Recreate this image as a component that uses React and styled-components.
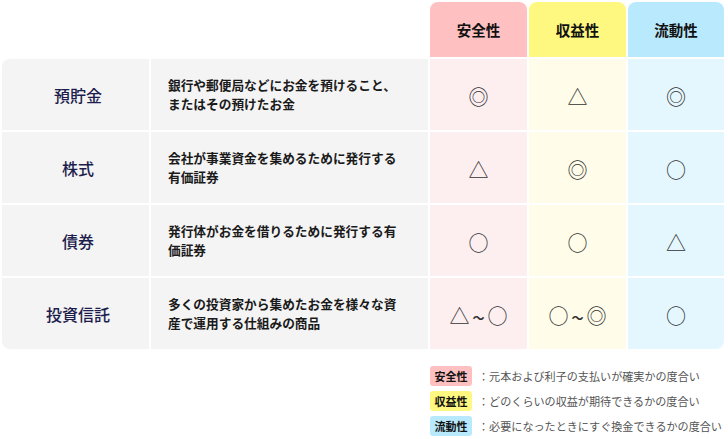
import React from "react";
import styled, { createGlobalStyle } from "styled-components";

const Global = createGlobalStyle`
  html, body { margin: 0; padding: 0; background: #fff; }
  body { font-family: "Noto Sans CJK JP", "Noto Sans", sans-serif; }
`;

const Page = styled.div`
  padding: 2px;
  width: 724px;
  box-sizing: border-box;
`;

const Table = styled.div`
  display: grid;
  grid-template-columns: 147px 277px 97px 97px 96px;
  grid-template-rows: 55px repeat(4, 71px);
  gap: 2px;
`;

const colors = {
  safe: { head: "#ffc0c1", body: "#fdeff0" },
  profit: { head: "#fff880", body: "#fffde9" },
  liquid: { head: "#b9e9fd", body: "#e5f7fe" },
};

const Blank = styled.div``;

const Head = styled.div`
  background: ${(p) => colors[p.$kind].head};
  border-radius: 8px 8px 0 0;
  display: flex;
  align-items: center;
  justify-content: center;
  font-weight: 700;
  font-size: 14.5px;
  color: #111;
`;

const Label = styled.div`
  background: #f4f4f4;
  display: flex;
  align-items: center;
  justify-content: center;
  font-size: 16px;
  font-weight: 500;
  color: #1d1d4d;
  padding-left: 5px;
  border-radius: ${(p) => (p.$first ? "8px 0 0 0" : p.$last ? "0 0 0 8px" : "0")};
`;

const Desc = styled.div`
  background: #f4f4f4;
  display: flex;
  align-items: center;
  padding: 0 12px 0 17px;
  font-size: 12.7px;
  line-height: 18.5px;
  font-weight: 700;
  color: #1a1a1a;
`;

const Mark = styled.div`
  background: ${(p) => colors[p.$kind].body};
  display: flex;
  align-items: center;
  justify-content: center;
  font-size: 20px;
  color: #333;
  padding-top: 4px;
  border-radius: ${(p) => (p.$corner ? "0 0 8px 0" : "0")};
`;

const Tilde = styled.span`
  font-size: 12px;
  font-weight: 700;
  margin: 3px 3px 0;
`;

const Legend = styled.div`
  margin-left: 428px;
  margin-top: 17px;
  display: flex;
  flex-direction: column;
  gap: 5px;
`;

const LegendRow = styled.div`
  display: flex;
  align-items: center;
  gap: 6px;
`;

const Badge = styled.span`
  background: ${(p) => colors[p.$kind].head};
  height: 20px;
  width: 42px;
  display: inline-flex;
  align-items: center;
  justify-content: center;
  border-radius: 3px;
  font-size: 11px;
  font-weight: 700;
  color: #111;
`;

const LegendText = styled.span`
  font-size: 11.1px;
  color: #555;
`;

const rows = [
  { label: "預貯金", desc: "銀行や郵便局などにお金を預けること、\nまたはその預けたお金", marks: ["◎", "△", "◎"] },
  { label: "株式", desc: "会社が事業資金を集めるために発行する\n有価証券", marks: ["△", "◎", "○"] },
  { label: "債券", desc: "発行体がお金を借りるために発行する有\n価証券", marks: ["○", "○", "△"] },
  { label: "投資信託", desc: "多くの投資家から集めたお金を様々な資\n産で運用する仕組みの商品", marks: [["△", "○"], ["○", "◎"], "○"] },
];

const kinds = ["safe", "profit", "liquid"];
const heads = ["安全性", "収益性", "流動性"];

const legend = [
  ["safe", "安全性", "：元本および利子の支払いが確実かの度合い"],
  ["profit", "収益性", "：どのくらいの収益が期待できるかの度合い"],
  ["liquid", "流動性", "：必要になったときにすぐ換金できるかの度合い"],
];

export default function App() {
  return (
    <Page>
      <Global />
      <Table>
        <Blank />
        <Blank />
        {heads.map((h, i) => (
          <Head key={h} $kind={kinds[i]}>{h}</Head>
        ))}
        {rows.map((r, ri) => (
          <React.Fragment key={r.label}>
            <Label $first={ri === 0} $last={ri === rows.length - 1}>{r.label}</Label>
            <Desc>
              <span>
                {r.desc.split("\n").map((l, i) => (
                  <React.Fragment key={i}>
                    {i > 0 && <br />}
                    {l}
                  </React.Fragment>
                ))}
              </span>
            </Desc>
            {r.marks.map((m, mi) => (
              <Mark key={mi} $kind={kinds[mi]} $corner={ri === rows.length - 1 && mi === 2}>
                {Array.isArray(m) ? (
                  <>
                    {m[0]}
                    <Tilde>～</Tilde>
                    {m[1]}
                  </>
                ) : (
                  m
                )}
              </Mark>
            ))}
          </React.Fragment>
        ))}
      </Table>
      <Legend>
        {legend.map(([k, b, t]) => (
          <LegendRow key={k}>
            <Badge $kind={k}>{b}</Badge>
            <LegendText>{t}</LegendText>
          </LegendRow>
        ))}
      </Legend>
    </Page>
  );
}
